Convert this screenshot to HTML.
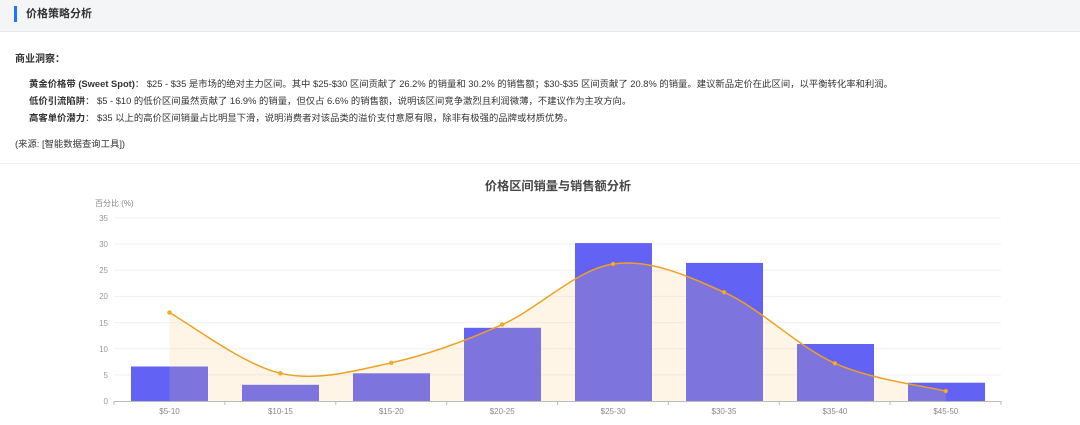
<!DOCTYPE html>
<html><head><meta charset="utf-8"><style>
body{margin:0;width:1080px;height:425px;background:#fff;font-family:"Liberation Sans","Noto Sans CJK SC",sans-serif;color:#333;overflow:hidden;position:relative}
.hdr{position:absolute;left:0;top:0;width:1080px;height:31px;background:#f4f5f7;border-bottom:1px solid #e8e9ec}
.bar{position:absolute;left:14px;top:6px;width:3px;height:16px;background:#1677ff}
.ttl{position:absolute;left:26px;top:6px;font-size:11px;font-weight:bold;line-height:16px;color:#333}
.t{position:absolute;font-size:9.35px;line-height:14px;white-space:nowrap;color:#333}
b{font-weight:bold}
.sep{position:absolute;left:0;top:163px;width:1080px;height:1px;background:#f0f0f0}
</style></head><body>
<div class="hdr"><div class="bar"></div><div class="ttl">价格策略分析</div></div>
<div class="t" style="left:15px;top:53px;font-size:10px"><b>商业洞察：</b></div>
<div class="t" style="left:29px;top:77px"><b>黄金价格带 (Sweet Spot)</b>：&nbsp;$25 - $35 是市场的绝对主力区间。其中 $25-$30 区间贡献了 26.2% 的销量和 30.2% 的销售额；$30-$35 区间贡献了 20.8% 的销量。建议新品定价在此区间，以平衡转化率和利润。</div>
<div class="t" style="left:29px;top:94px"><b>低价引流陷阱</b>：&nbsp;$5 - $10 的低价区间虽然贡献了 16.9% 的销量，但仅占 6.6% 的销售额，说明该区间竞争激烈且利润微薄，不建议作为主攻方向。</div>
<div class="t" style="left:29px;top:111px"><b>高客单价潜力</b>：&nbsp;$35 以上的高价区间销量占比明显下滑，说明消费者对该品类的溢价支付意愿有限，除非有极强的品牌或材质优势。</div>
<div class="t" style="left:15px;top:137px">(来源: [智能数据查询工具])</div>
<div class="sep"></div>
<svg width="1080" height="425" style="position:absolute;left:0;top:0" font-family="Liberation Sans, Noto Sans CJK SC, sans-serif">
<text x="558" y="190" text-anchor="middle" font-size="12.2" font-weight="bold" fill="#464646">价格区间销量与销售额分析</text>
<text x="95" y="206" font-size="8" fill="#888">百分比 (%)</text>
<g stroke="#eef0f3" stroke-width="1">
<line x1="114" x2="1001" y1="218" y2="218"/><line x1="114" x2="1001" y1="244.1" y2="244.1"/><line x1="114" x2="1001" y1="270.3" y2="270.3"/><line x1="114" x2="1001" y1="296.4" y2="296.4"/><line x1="114" x2="1001" y1="322.6" y2="322.6"/><line x1="114" x2="1001" y1="348.7" y2="348.7"/><line x1="114" x2="1001" y1="374.9" y2="374.9"/>
</g>
<g font-size="8" fill="#999" text-anchor="end">
<text x="108" y="221">35</text><text x="108" y="247">30</text><text x="108" y="273">25</text><text x="108" y="299">20</text><text x="108" y="326">15</text><text x="108" y="352">10</text><text x="108" y="378">5</text><text x="108" y="404">0</text>
</g>
<g fill="#6262f5">
<rect x="131" y="366.5" width="77" height="34.5"/><rect x="242" y="384.8" width="77" height="16.2"/><rect x="353" y="373.3" width="77" height="27.7"/><rect x="464" y="327.8" width="77" height="73.2"/><rect x="575" y="243.1" width="77" height="157.9"/><rect x="686" y="262.9" width="77" height="138.1"/><rect x="797" y="344" width="77" height="57"/><rect x="908" y="382.7" width="77" height="18.3"/>
</g>
<path d="M169.5,312.6 C188,322.7 243.4,364.9 280.4,373.3 C317.4,381.7 354.3,370.9 391.3,362.8 C428.3,354.7 465.2,341.1 502.2,324.6 C539.2,308.1 576.1,269.4 613.1,264 C650.1,258.6 687,275.7 724,292.2 C761,308.8 797.9,346.8 834.9,363.3 C871.9,379.8 927.3,386.5 945.8,391.1 L945.8,401 L169.5,401 Z" fill="rgba(250,200,120,0.18)"/>
<path d="M169.5,312.6 C188,322.7 243.4,364.9 280.4,373.3 C317.4,381.7 354.3,370.9 391.3,362.8 C428.3,354.7 465.2,341.1 502.2,324.6 C539.2,308.1 576.1,269.4 613.1,264 C650.1,258.6 687,275.7 724,292.2 C761,308.8 797.9,346.8 834.9,363.3 C871.9,379.8 927.3,386.5 945.8,391.1" fill="none" stroke="#f0a020" stroke-width="1.5"/>
<g fill="#f5b030" stroke="#f0a020" stroke-width="0.8">
<circle cx="169.5" cy="312.6" r="1.8"/><circle cx="280.4" cy="373.3" r="1.8"/><circle cx="391.3" cy="362.8" r="1.8"/><circle cx="502.2" cy="324.6" r="1.8"/><circle cx="613.1" cy="264" r="1.8"/><circle cx="724" cy="292.2" r="1.8"/><circle cx="834.9" cy="363.3" r="1.8"/><circle cx="945.8" cy="391.1" r="1.8"/>
</g>
<line x1="114" x2="1001" y1="401.5" y2="401.5" stroke="#bbb"/>
<g stroke="#bbb"><line x1="114" x2="114" y1="401" y2="405"/><line x1="224.9" x2="224.9" y1="401" y2="405"/><line x1="335.8" x2="335.8" y1="401" y2="405"/><line x1="446.6" x2="446.6" y1="401" y2="405"/><line x1="557.5" x2="557.5" y1="401" y2="405"/><line x1="668.4" x2="668.4" y1="401" y2="405"/><line x1="779.3" x2="779.3" y1="401" y2="405"/><line x1="890.1" x2="890.1" y1="401" y2="405"/><line x1="1001" x2="1001" y1="401" y2="405"/></g>
<g font-size="8" fill="#888" text-anchor="middle">
<text x="169.5" y="414">$5-10</text><text x="280.4" y="414">$10-15</text><text x="391.3" y="414">$15-20</text><text x="502.2" y="414">$20-25</text><text x="613.1" y="414">$25-30</text><text x="724" y="414">$30-35</text><text x="834.9" y="414">$35-40</text><text x="945.8" y="414">$45-50</text>
</g>
</svg>
</body></html>
